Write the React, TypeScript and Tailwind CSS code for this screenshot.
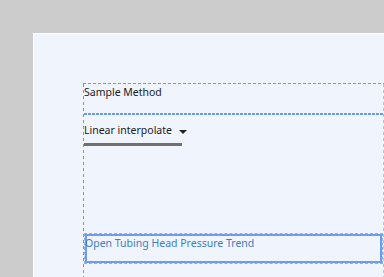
const App = () => {
  return (
    <div className="flex h-screen w-screen overflow-hidden bg-[#cccccc] pl-[33px] pt-[33px] font-['Noto_Sans',sans-serif]">
      <div className="flex-1 border-l border-t border-white bg-[#f0f4fd] pl-[49px] pt-[49px]">
        <div className="flex h-[400px] w-[301px] flex-col">
          <div className="h-px w-full bg-[repeating-linear-gradient(90deg,#6b98ea_0_3px,transparent_3px_5px)]" />
          <div className="flex flex-1">
            <div className="w-px bg-[repeating-linear-gradient(180deg,#6b98ea_0_3px,transparent_3px_6px)]" />
            <div className="flex flex-1 flex-col">
              <div className="h-[29px] pt-[1px] text-[10.5px] leading-[14px] text-[#222]">
                Sample Method
              </div>
              <div className="h-[2px] w-full bg-[repeating-linear-gradient(90deg,#6b98ea_0_3px,transparent_3px_4px)]" />
              <div className="pt-[8px]">
                <div className="flex items-center whitespace-nowrap text-[10.5px] leading-[14px] text-[#222]">
                  Linear interpolate
                  <svg className="ml-[7px] mt-[3px]" width="8" height="4" viewBox="0 0 8 4">
                    <path d="M0 0 L8 0 L4 4 Z" fill="#222" />
                  </svg>
                </div>
                <div className="mt-[6px] h-[3px] w-[98px] bg-[#707070]" />
              </div>
              <div className="mt-[87px] h-[31px] border border-dashed border-[#8fb0ee]">
                <div className="h-full pt-[2px] text-[10.5px] leading-[14px] text-[#3c7fc4] shadow-[inset_0_0_0_2px_#6e9cec]">
                  Open Tubing Head Pressure Trend
                </div>
              </div>
            </div>
            <div className="w-px bg-[repeating-linear-gradient(180deg,#a9c3f0_0_3px,transparent_3px_6px)]" />
          </div>
        </div>
      </div>
    </div>
  );
};

export default App;
